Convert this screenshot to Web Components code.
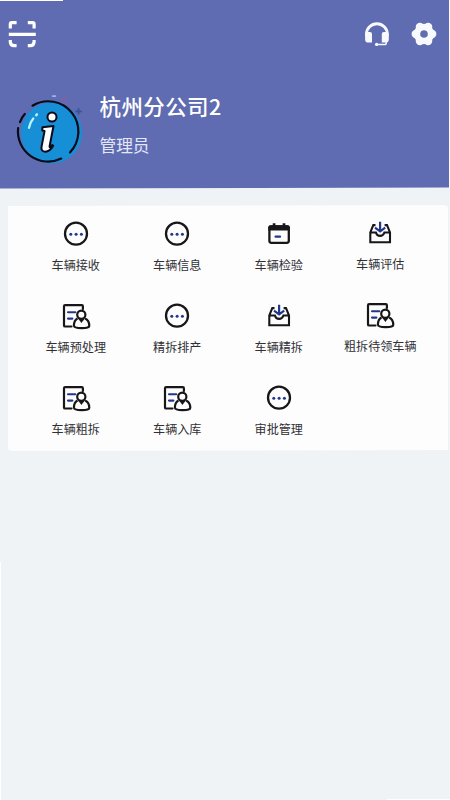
<!DOCTYPE html>
<html lang="zh-CN">
<head>
<meta charset="utf-8">
<title>杭州分公司2</title>
<style>
html, body { margin: 0; height: 100%; background: #f0f3f5; }
body { font-family: "Noto Sans CJK SC", sans-serif; overflow: hidden; }
</style>
</head>
<body>
<app-page></app-page>
<script>
const ICONS = {
  dots: `<circle cx="14" cy="13.7" r="11" fill="none" stroke="#17171a" stroke-width="2.3"/>
    <g fill="#22378c"><circle cx="8.8" cy="14.2" r="1.5"/><circle cx="14.1" cy="14.2" r="1.5"/><circle cx="19.4" cy="14.2" r="1.5"/></g>`,
  calendar: `<rect x="4.4" y="6.3" width="19.4" height="16.5" rx="2" fill="none" stroke="#17171a" stroke-width="2.3"/>
    <path d="M3.3 10.5V7.2q0-2 2-2h17.5q2 0 2 2v3.3z" fill="#17171a"/>
    <path d="M9.1 3.2v4M19 3.2v4" stroke="#17171a" stroke-width="2.7"/>
    <path d="M10.6 16.7h4.4" stroke="#22378c" stroke-width="2.3" stroke-linecap="round"/>`,
  inbox: `<path d="M9.5 6.1H7.3L4.3 13.4V23.2H24V13.4L21 6.1H18.6M4.3 13.5H9.9Q10.8 16.9 14.1 16.9T18.4 13.5H24" fill="none" stroke="#17171a" stroke-width="2.1"/>
    <path d="M14.1 2.8v9.3M9 8.6l5.1 3.8 5.1-3.8" fill="none" stroke="#22378c" stroke-width="2.2"/>`,
  person: `<path d="M20.9 7.1V4.2q0-1.1-1.1-1.1H3.1Q2 3.1 2 4.2v19.2q0 1.1 1.1 1.1h6.4" fill="none" stroke="#17171a" stroke-width="2.2" stroke-linecap="round"/>
    <path d="M6 10.2h7.3M6 16.6h4.4" stroke="#22378c" stroke-width="2.1" stroke-linecap="round"/>
    <path d="M15.5 16.4Q12 18.2 11.9 23.5Q12 26.2 19.8 26.2T27.3 23.5Q27.1 18.1 23.1 16.4" fill="#fdfdfe" stroke="#17171a" stroke-width="2.2"/>
    <circle cx="19.3" cy="12.7" r="4.1" fill="#fdfdfe" stroke="#17171a" stroke-width="2.2"/>
    <path d="M16.1 16.5h6.7l-3.4 4.4z" fill="#17171a"/>`
};

class ScanIcon extends HTMLElement {
  constructor() {
    super();
    this.attachShadow({ mode: 'open' }).innerHTML = `
      <style>:host{display:block;width:28px;height:28px}svg{display:block}</style>
      <svg width="28" height="28" viewBox="0 0 28 28" fill="none" stroke="#fff" stroke-width="3.2">
        <path d="M2.3 8.5V4.2q0-1.6 1.6-1.6H8.6M19.8 2.6h4.7q1.6 0 1.6 1.6V8.5M2.3 20v1.8q.2 3.7 3.8 3.9H8.6M19.8 25.7h2.5q3.6-.2 3.8-3.9V20"/>
        <path d="M.8 14.3h27" stroke-width="3.2"/>
      </svg>`;
  }
}
customElements.define('scan-icon', ScanIcon);

class HeadsetIcon extends HTMLElement {
  constructor() {
    super();
    this.attachShadow({ mode: 'open' }).innerHTML = `
      <style>:host{display:block;width:26px;height:26px}svg{display:block}</style>
      <svg width="26" height="26" viewBox="0 0 26 26" fill="none" stroke="#f8f9ff">
        <path d="M2.5 15V13a10.4 10.2 0 0 1 20.8 0v2" stroke-width="2.9"/>
        <path d="M1.1 14q0-2.9 2.7-2.9H6q2 0 2 2v8.4H4.2q-3.1 0-3.1-3.1zM24.8 14q0-2.9-2.7-2.9H19.8q-2 0-2 2v8.4H21.7q3.1 0 3.1-3.1z" fill="#f8f9ff" stroke="none"/>
        <path d="M22.2 20.5v2q0 .9-.9.9H13" stroke-width="1.5"/>
        <circle cx="12.6" cy="23.4" r="1.6" fill="#f8f9ff" stroke="none"/>
      </svg>`;
  }
}
customElements.define('headset-icon', HeadsetIcon);

class GearIcon extends HTMLElement {
  constructor() {
    super();
    this.attachShadow({ mode: 'open' }).innerHTML = `
      <style>:host{display:block;width:26px;height:26px}svg{display:block}</style>
      <svg width="26" height="26" viewBox="0 0 26 26">
        <g fill="#f8f9ff">
          <circle cx="4.8" cy="13" r="4.2"/><circle cx="21.2" cy="13" r="4.2"/>
          <circle cx="8.9" cy="5.9" r="4.2"/><circle cx="17.1" cy="5.9" r="4.2"/>
          <circle cx="8.9" cy="20.1" r="4.2"/><circle cx="17.1" cy="20.1" r="4.2"/>
        </g>
        <circle cx="13" cy="13" r="7" fill="none" stroke="#f8f9ff" stroke-width="6.4"/>
      </svg>`;
  }
}
customElements.define('gear-icon', GearIcon);

class InfoAvatar extends HTMLElement {
  constructor() {
    super();
    this.attachShadow({ mode: 'open' }).innerHTML = `
      <style>:host{display:block;width:80px;height:80px}svg{display:block}</style>
      <svg width="80" height="80" viewBox="0 0 80 80" fill="none">
        <circle cx="41.5" cy="43" r="30.5" fill="#168fd6"/>
        <g stroke="#080b19" stroke-width="2.2" stroke-linecap="round">
          <path d="M22.5 15.7A30.2 30.2 0 0 1 60 62.4"/>
          <path d="M51.3 68.6A30.2 30.2 0 0 1 8.1 38.2"/>
          <path d="M10 32.2Q11.5 27.5 14.8 24"/>
        </g>
        <path d="M19 37.8Q20 32.3 23.3 28.5M26.2 25.3l.8-1" stroke="#baf5fa" stroke-width="2.3" stroke-linecap="round"/>
        <circle cx="42" cy="27" r="4.5" fill="#fff" stroke="#080b19" stroke-width="2"/>
        <path d="M32.5 37.2L43.5 36L39.6 56.2Q39.5 58 40.8 56.8L42.3 55L43.2 55.8Q40 61.5 35.2 61.7Q30.6 61.5 31.6 56.4L34.6 40.9L32.2 40.4Z" fill="#fff" stroke="#080b19" stroke-width="2" stroke-linejoin="round"/>
        <path d="M42.5 6.1h3" stroke="#91b9ed" stroke-width="1.6" stroke-linecap="round"/>
        <circle cx="54.5" cy="10.1" r="2" stroke="#855da8" stroke-width="1.2"/>
        <circle cx="64.5" cy="12.5" r="1" fill="#7860ac"/>
        <path d="M68.6 18.2v6.4M65.4 21.4h6.4" stroke="#3a519d" stroke-width="1.8"/>
      </svg>`;
  }
}
customElements.define('info-avatar', InfoAvatar);

class ProfileHeader extends HTMLElement {
  constructor() {
    super();
    this.attachShadow({ mode: 'open' }).innerHTML = `
      <style>
        :host{display:block;box-sizing:border-box;width:449px;height:188.5px;background:#5f6cb1;
          clip-path:polygon(0 1px,63px 1px,63px 0,100% 0,100% 187.5px,0 100%)}
        nav{display:flex;align-items:center;padding:20px 12px 0 8px;height:28px}
        headset-icon{margin-left:auto;margin-right:21px}
        section{display:flex;padding:42px 0 0 10px}
        .who{padding:1px 0 0 9.5px;white-space:nowrap}
        ::slotted([slot=name]){display:block;font-size:21.5px;line-height:30px;font-weight:500;color:#fff;letter-spacing:.4px}
        ::slotted([slot=role]){display:block;font-size:16.7px;line-height:24px;margin-top:12px;color:#e4e7fa}
      </style>
      <nav><scan-icon></scan-icon><headset-icon></headset-icon><gear-icon></gear-icon></nav>
      <section><info-avatar></info-avatar>
        <div class="who"><slot name="name"></slot><slot name="role"></slot></div>
      </section>`;
  }
}
customElements.define('profile-header', ProfileHeader);

class MenuTile extends HTMLElement {
  constructor() {
    super();
    this.attachShadow({ mode: 'open' }).innerHTML = `
      <style>
        :host{display:flex;flex-direction:column;align-items:center}
        svg{display:block;overflow:visible}
        .label{font-size:12.1px;line-height:18px;margin-top:8px;color:#303033;white-space:nowrap}
      </style>
      <svg width="28" height="28" viewBox="0 0 28 28">${ICONS[this.getAttribute('icon')] || ''}</svg>
      <div class="label"><slot></slot></div>`;
  }
}
customElements.define('menu-tile', MenuTile);

class MenuCard extends HTMLElement {
  constructor() {
    super();
    this.attachShadow({ mode: 'open' }).innerHTML = `
      <style>
        :host{display:grid;box-sizing:border-box;width:440px;height:246px;margin:16.5px 0 0 8px;padding:14.5px 17px 0;
          grid-template-columns:repeat(4,101.5px);grid-auto-rows:82px;align-content:start;
          background:#fdfdfe;border-radius:4px;clip-path:polygon(0 1px,100% 0,100% 245px,0 100%)}
        ::slotted(.end){margin-top:-.5px}
      </style>
      <slot></slot>`;
  }
}
customElements.define('menu-card', MenuCard);

class AppPage extends HTMLElement {
  constructor() {
    super();
    this.attachShadow({ mode: 'open' }).innerHTML = `
      <style>
        :host{display:block;box-sizing:border-box;width:450px;height:800px;
          background:
            linear-gradient(#fff,#fff) 0 0/63px 1px no-repeat,
            linear-gradient(#fdfdfe,#fdfdfe) 449px 0/1px 188px no-repeat,
            linear-gradient(#fff,#fff) 0 562px/1px 238px no-repeat,
            linear-gradient(#fff,#fff) 387px 799px/63px 1px no-repeat,
            #f0f3f5}
      </style>
      <profile-header><span slot="name">杭州分公司2</span><span slot="role">管理员</span></profile-header>
      <menu-card>
        <menu-tile icon="dots">车辆接收</menu-tile>
        <menu-tile icon="dots">车辆信息</menu-tile>
        <menu-tile icon="calendar">车辆检验</menu-tile>
        <menu-tile icon="inbox" class="end">车辆评估</menu-tile>
        <menu-tile icon="person">车辆预处理</menu-tile>
        <menu-tile icon="dots">精拆排产</menu-tile>
        <menu-tile icon="inbox">车辆精拆</menu-tile>
        <menu-tile icon="person" class="end">粗拆待领车辆</menu-tile>
        <menu-tile icon="person">车辆粗拆</menu-tile>
        <menu-tile icon="person">车辆入库</menu-tile>
        <menu-tile icon="dots">审批管理</menu-tile>
      </menu-card>`;
  }
}
customElements.define('app-page', AppPage);
</script>
</body>
</html>
